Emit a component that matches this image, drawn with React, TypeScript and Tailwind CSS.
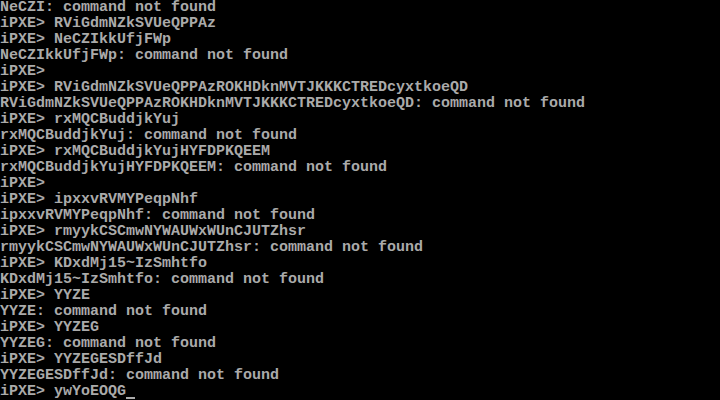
const lines: string[] = [
  "NeCZI: command not found",
  "iPXE> RViGdmNZkSVUeQPPAz",
  "iPXE> NeCZIkkUfjFWp",
  "NeCZIkkUfjFWp: command not found",
  "iPXE>",
  "iPXE> RViGdmNZkSVUeQPPAzROKHDknMVTJKKKCTREDcyxtkoeQD",
  "RViGdmNZkSVUeQPPAzROKHDknMVTJKKKCTREDcyxtkoeQD: command not found",
  "iPXE> rxMQCBuddjkYuj",
  "rxMQCBuddjkYuj: command not found",
  "iPXE> rxMQCBuddjkYujHYFDPKQEEM",
  "rxMQCBuddjkYujHYFDPKQEEM: command not found",
  "iPXE>",
  "iPXE> ipxxvRVMYPeqpNhf",
  "ipxxvRVMYPeqpNhf: command not found",
  "iPXE> rmyykCSCmwNYWAUWxWUnCJUTZhsr",
  "rmyykCSCmwNYWAUWxWUnCJUTZhsr: command not found",
  "iPXE> KDxdMj15~IzSmhtfo",
  "KDxdMj15~IzSmhtfo: command not found",
  "iPXE> YYZE",
  "YYZE: command not found",
  "iPXE> YYZEG",
  "YYZEG: command not found",
  "iPXE> YYZEGESDffJd",
  "YYZEGESDffJd: command not found",
];

const App = () => {
  return (
    <div className="w-[720px] h-[400px] overflow-hidden bg-black text-[#aaaaaa] font-['Liberation_Mono',monospace] text-[15px] leading-[16px] font-bold">
      {lines.map((line, i) => (
        <div key={i} className="h-[16px] whitespace-pre">
          {line}
        </div>
      ))}
      {/* prompt with blinking-style cursor */}
      <div className="h-[16px] whitespace-pre flex">
        <span>iPXE&gt; ywYoEOQG</span>
        <span className="w-[9px] h-[16px] flex items-end">
          <span className="w-[9px] h-[2px] mb-[1px] bg-[#aaaaaa]" />
        </span>
      </div>
    </div>
  );
};

export default App;
